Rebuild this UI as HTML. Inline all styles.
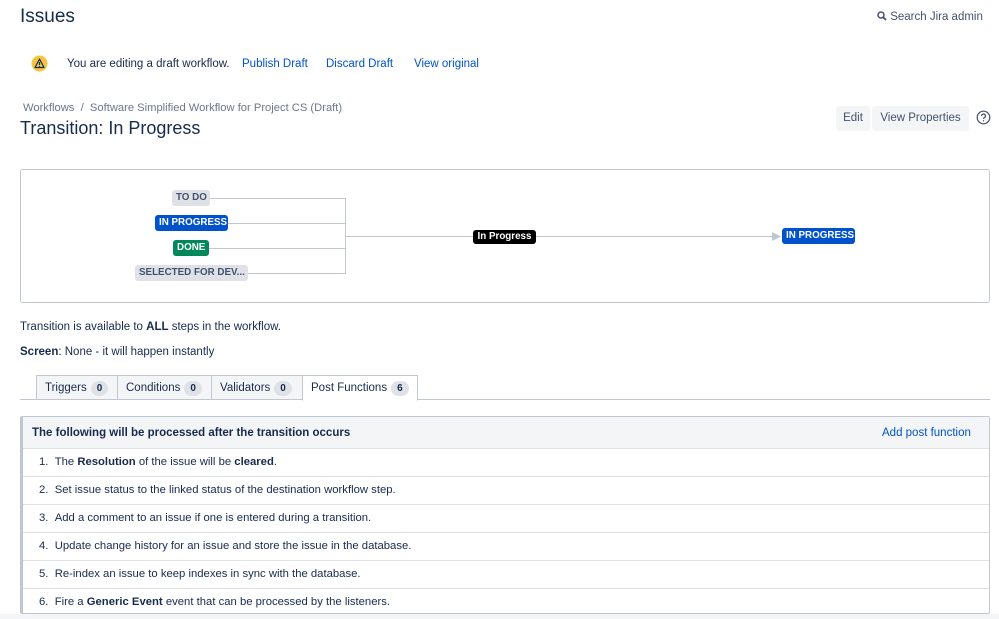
<!DOCTYPE html>
<html><head><meta charset="utf-8"><style>
*{margin:0;padding:0;box-sizing:border-box}
body{width:999px;height:619px;overflow:hidden;background:#fff;font-family:"Liberation Sans",Arial,sans-serif;color:#172b4d;position:relative;font-size:11.5px}
.a{position:absolute;white-space:nowrap}
a{color:#0052cc;text-decoration:none}
.lz{position:absolute;white-space:nowrap;height:16px;line-height:16px;border-radius:3px;font-size:9.8px;font-weight:bold;padding:0 4px;text-transform:uppercase;text-align:center}
.tab{position:absolute;top:375px;height:25px;border:1px solid #c1c7d0;background:#f4f5f7;font-size:11.5px;line-height:24px;padding-left:8px;color:#172b4d;white-space:nowrap}
.cnt{display:inline-block;background:#dfe1e6;border-radius:9px;font-size:10px;font-weight:bold;padding:0 6px;line-height:15px;margin-left:4px}
.row{position:absolute;left:23px;width:966px;height:28px;border-top:1px solid #dfe1e6;font-size:11.3px;line-height:27px;padding-left:16px;white-space:nowrap}
</style></head><body>
<div class="a" style="left:20px;top:6px;font-size:19px;color:#172b4d">Issues</div>
<div class="a" style="left:877px;top:11px;font-size:11.5px;color:#42526e"><svg width="10" height="10" viewBox="0 0 10 10" style="vertical-align:-1px"><circle cx="4" cy="4" r="3" fill="none" stroke="#42526e" stroke-width="1.5"/><path d="M6 6L9 9" stroke="#42526e" stroke-width="1.8"/></svg> Search Jira admin</div>
<svg class="a" style="left:31px;top:55px" width="17" height="17" viewBox="0 0 17 17"><circle cx="8.5" cy="8.5" r="8" fill="#f4c542"/><path d="M8.5 4L13 12.5H4Z" fill="none" stroke="#172b4d" stroke-width="1.2" stroke-linejoin="round"/><path d="M8.5 7v3" stroke="#172b4d" stroke-width="1.2"/><circle cx="8.5" cy="11.3" r=".6" fill="#172b4d"/></svg>
<div class="a" style="left:67px;top:58px">You are editing a draft workflow.</div>
<a class="a" style="left:242px;top:58px">Publish Draft</a>
<a class="a" style="left:326px;top:58px">Discard Draft</a>
<a class="a" style="left:414px;top:58px">View original</a>
<div class="a" style="left:23px;top:102px;font-size:11.2px;color:#6b778c">Workflows &nbsp;/&nbsp; Software Simplified Workflow for Project CS (Draft)</div>
<div class="a" style="left:20px;top:118px;font-size:18px;color:#172b4d">Transition: In Progress</div>
<div class="a" style="left:836px;top:106px;width:34px;height:25px;background:#f4f5f7;border-radius:3px;line-height:25px;text-align:center;color:#42526e">Edit</div>
<div class="a" style="left:872px;top:106px;width:97px;height:25px;background:#f4f5f7;border-radius:3px;line-height:25px;text-align:center;color:#42526e">View Properties</div>
<svg class="a" style="left:976px;top:110px" width="15" height="15" viewBox="0 0 15 15"><circle cx="7.5" cy="7.5" r="6.3" fill="none" stroke="#42526e" stroke-width="1.2"/><path d="M5.6 6a1.9 1.9 0 1 1 2.6 1.7c-.5.3-.7.6-.7 1.2" fill="none" stroke="#42526e" stroke-width="1.2"/><circle cx="7.5" cy="10.8" r=".7" fill="#42526e"/></svg>
<div class="a" style="left:20px;top:169px;width:970px;height:134px;border:1px solid #c1c7d0;border-radius:3px"></div>
<svg class="a" style="left:0;top:0" width="999" height="300"><g stroke="#c1c7d0" stroke-width="1" fill="none"><path d="M210 198.5H345.5V273.5H248M228 223.5H345.5M209 248.5H345.5M345.5 236.5H474M536 236.5H774"/></g><path d="M772 232L781 236.5L772 241Z" fill="#c1c7d0"/></svg>
<div class="lz" style="left:172px;top:190px;width:38px;background:#dfe1e6;color:#42526e">To Do</div>
<div class="lz" style="left:155px;top:215px;width:73px;background:#0052cc;color:#fff">In Progress</div>
<div class="lz" style="left:173px;top:240px;width:36px;background:#00875a;color:#fff">Done</div>
<div class="lz" style="left:135px;top:265px;width:113px;background:#dfe1e6;color:#42526e">Selected for Dev...</div>
<div class="lz" style="left:473px;top:230px;width:63px;background:#000;color:#fff;text-transform:none;height:14px;line-height:14px">In Progress</div>
<div class="lz" style="left:782px;top:228px;width:73px;background:#0052cc;color:#fff">In Progress</div>
<div class="a" style="left:20px;top:321px">Transition is available to <b>ALL</b> steps in the workflow.</div>
<div class="a" style="left:20px;top:346px"><b>Screen</b>: None - it will happen instantly</div>
<div class="a" style="left:20px;top:399px;width:970px;border-top:1px solid #c1c7d0"></div>
<div class="tab" style="left:36px;width:82px">Triggers<span class="cnt">0</span></div>
<div class="tab" style="left:117px;width:95px">Conditions<span class="cnt">0</span></div>
<div class="tab" style="left:211px;width:92px">Validators<span class="cnt">0</span></div>
<div class="tab" style="left:302px;width:116px;background:#fff;border-bottom-color:#fff;height:26px">Post Functions<span class="cnt">6</span></div>
<div class="a" style="left:20px;top:416px;width:970px;height:198px;border:1px solid #c1c7d0;border-left:3px solid #c1c7d0;border-radius:2px"></div>
<div class="a" style="left:23px;top:417px;width:966px;height:31px;background:#f4f5f7"></div>
<div class="a" style="left:32px;top:427px;font-size:11.5px;font-weight:bold">The following will be processed after the transition occurs</div>
<a class="a" style="left:882px;top:427px">Add post function</a>
<div class="row" style="top:448px">1. &nbsp;The <b>Resolution</b> of the issue will be <b>cleared</b>.</div>
<div class="row" style="top:476px">2. &nbsp;Set issue status to the linked status of the destination workflow step.</div>
<div class="row" style="top:504px">3. &nbsp;Add a comment to an issue if one is entered during a transition.</div>
<div class="row" style="top:532px">4. &nbsp;Update change history for an issue and store the issue in the database.</div>
<div class="row" style="top:560px">5. &nbsp;Re-index an issue to keep indexes in sync with the database.</div>
<div class="row" style="top:588px;height:25px">6. &nbsp;Fire a <b>Generic Event</b> event that can be processed by the listeners.</div>
<div class="a" style="left:0;top:614px;width:999px;height:5px;background:#f4f5f7"></div>
</body></html>
